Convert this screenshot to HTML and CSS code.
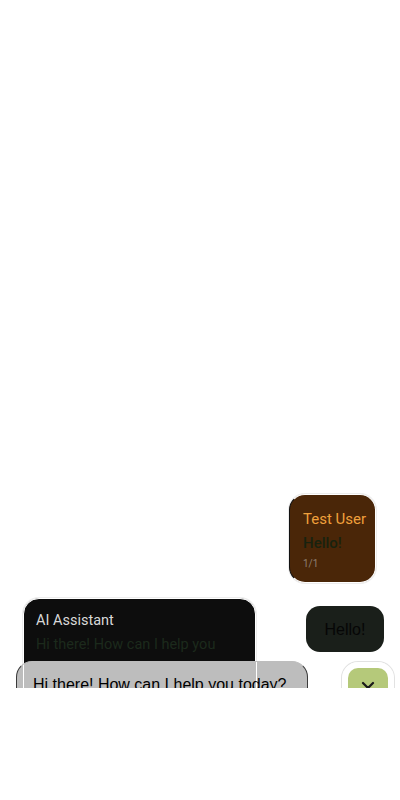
FILE: index.html
```
<!DOCTYPE html>
<html>
<head>
<meta charset="utf-8">
<link rel="stylesheet" href="styles.css">
</head>
<body>
<div class="stage">
  <div class="row row-user">
    <div class="user-card">
      <div class="user-name">Test User</div>
      <div class="user-text">Hello!</div>
      <div class="user-meta">1/1</div>
    </div>
  </div>
  <div class="row row-ai">
    <div class="ai-card">
      <div class="ai-name">AI Assistant</div>
      <div class="ai-text">Hi there! How can I help you today?</div>
    </div>
    <div class="pill">Hello!</div>
  </div>
  <div class="composer">
    <div class="composer-box">Hi there! How can I help you today?</div>
    <div class="send-ring">
      <button class="send" type="button" aria-label="close">
        <svg width="14" height="14" viewBox="0 0 14 14"><path d="M2 2 L12 12 M12 2 L2 12" stroke="#1a1a1a" stroke-width="2.2" stroke-linecap="round" fill="none"/></svg>
      </button>
    </div>
  </div>
</div>
</body>
</html>
```
FILE: styles.css
```
* { box-sizing: border-box; }
html, body { margin: 0; padding: 0; background: #ffffff; }
body { font-family: Roboto, "Noto Sans", sans-serif; }

.stage {
  position: relative;
  height: 688px;
  overflow: hidden;
  padding-top: 494px;
}

.row { display: flex; }
.row-user { justify-content: flex-end; padding-right: 24px; }

.user-card {
  width: 87px;
  height: 89px;
  background: #4a2608;
  border-radius: 16px;
  border: 1px solid #fff;
  border-left-color: #111;
  box-shadow: 0 0 0 1px rgba(150,150,150,0.18);
  padding: 14px 0 0 13px;
  white-space: nowrap;
}
.user-name { color: #f0a03c; font-size: 15px; line-height: 20px; }
.user-text { color: #18220f; font-size: 15px; line-height: 20px; margin-top: 4px; font-weight: 500; }
.user-meta { color: #8f8070; font-size: 10px; line-height: 14px; margin-top: 4px; }

.row-ai {
  margin-top: 15px;
  padding-left: 23px;
  padding-right: 16px;
  justify-content: space-between;
  align-items: flex-start;
}
.ai-card {
  width: 233px;
  background: #0d0d0d;
  border-radius: 16px;
  border: 1px solid #fff;
  box-shadow: 0 0 0 1px rgba(150,150,150,0.18);
  padding: 12px 12px 14px 12px;
}
.ai-name { color: #d8d8d8; font-size: 14.5px; line-height: 20px; }
.ai-text { color: #1c2a1c; font-size: 14.5px; line-height: 24px; margin-top: 2px; }

.pill {
  margin-top: 8px;
  width: 78px;
  height: 46px;
  background: #1a1f1a;
  border-radius: 14px;
  color: #060606;
  font-family: "Liberation Sans", Arial, sans-serif;
  font-size: 16px;
  padding-top: 2px;
  display: flex;
  align-items: center;
  justify-content: center;
}

.composer {
  position: absolute;
  left: 16px;
  right: 6px;
  top: 661px;
  display: flex;
  align-items: flex-start;
  justify-content: space-between;
}
.composer-box {
  width: 292px;
  height: 56px;
  background: #bdbdbd;
  border: 1px solid #3a3a3a;
  border-top-color: #bdbdbd;
  border-radius: 16px;
  padding: 14px 0 0 16px;
  color: #000;
  font-family: "Liberation Sans", Arial, sans-serif;
  font-size: 16px;
  line-height: 18px;
  white-space: nowrap;
  background-image: linear-gradient(90deg, transparent 6px, #fff 6px, #fff 7px, transparent 7px, transparent 239px, #fff 239px, #fff 240px, transparent 240px);
}
.send-ring {
  margin-top: 1px;
  width: 52px;
  height: 52px;
  border-radius: 16px;
  border: 1px solid #fff;
  box-shadow: 0 0 0 1px rgba(60,60,60,0.15);
  padding: 5px;
  display: flex;
}
.send {
  width: 40px;
  height: 40px;
  border: none;
  background: #b5c97a;
  border-radius: 10px;
  display: flex;
  align-items: center;
  justify-content: center;
  padding: 0;
}
```
